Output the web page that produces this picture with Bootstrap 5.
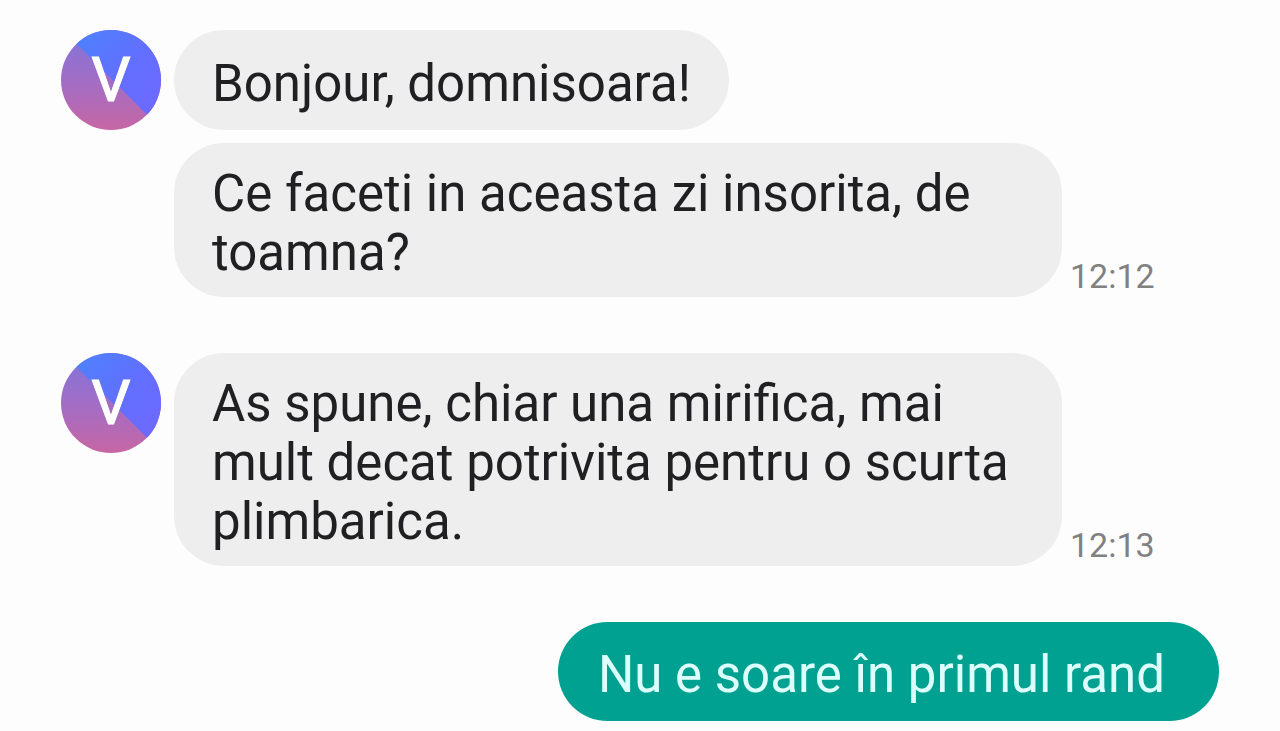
<!DOCTYPE html>
<html lang="ro">
<head>
<meta charset="utf-8">
<meta name="viewport" content="width=device-width, initial-scale=1">
<title>Chat</title>
<link href="https://cdn.jsdelivr.net/npm/bootstrap@5.3.0/dist/css/bootstrap.min.css" rel="stylesheet">
<style>
body{background:#fdfdfd;font-family:Roboto,"Liberation Sans",sans-serif;color:#202022}
.chat{padding:30px 61px 8px;gap:56px}
.thread{gap:13px}
.avatar{width:100px;height:100px}
.bubbles{gap:13px}
.bubble{background:#eee;border-radius:50px;padding:24px 38px 17px;font-size:51px;line-height:59px}
.bubble-wide{max-width:888px;padding:21px 38px 15px}
.stamp{font-size:34px;line-height:42px;color:#818181;margin-left:8px}
.bubble-own{background:#00a190;color:#dcfffb;padding:23px 54px 17px 40px}
</style>
</head>
<body>
<main class="chat d-flex flex-column">
<section class="thread d-flex align-items-start">
<svg class="avatar flex-shrink-0" viewBox="0 0 100 100" role="img" aria-label="V">
<defs>
<linearGradient id="warm" x1="0" y1="0" x2="0" y2="1"><stop offset=".15" stop-color="#8a72d6"/><stop offset=".6" stop-color="#a86cc0"/><stop offset="1" stop-color="#c766a4"/></linearGradient>
<linearGradient id="cool" x1="0" y1="0" x2="1" y2="1"><stop offset="0" stop-color="#4688fb"/><stop offset=".5" stop-color="#626ffe"/><stop offset="1" stop-color="#7466fe"/></linearGradient>
<clipPath id="disc"><circle cx="50" cy="50" r="50"/></clipPath>
</defs>
<g clip-path="url(#disc)"><path d="M0 0H100V100H0Z" fill="url(#warm)"/><path d="M0-2V-10H110V109Z" fill="url(#cool)"/></g>
<text x="50" y="71" text-anchor="middle" font-size="62" fill="#fff" stroke="#fff">V</text>
</svg>
<div class="bubbles d-flex flex-column align-items-start">
<div class="bubble">Bonjour, domnisoara!</div>
<div class="d-flex align-items-end"><div class="bubble bubble-wide">Ce faceti in aceasta zi insorita, de toamna?</div><time class="stamp">12:12</time></div>
</div>
</section>
<section class="thread d-flex align-items-start">
<svg class="avatar flex-shrink-0" viewBox="0 0 100 100" role="img" aria-label="V">
<g clip-path="url(#disc)"><path d="M0 0H100V100H0Z" fill="url(#warm)"/><path d="M0-2V-10H110V109Z" fill="url(#cool)"/></g>
<text x="50" y="71" text-anchor="middle" font-size="62" fill="#fff" stroke="#fff">V</text>
</svg>
<div class="d-flex align-items-end"><div class="bubble bubble-wide">As spune, chiar una mirifica, mai mult decat potrivita pentru o scurta plimbarica.</div><time class="stamp">12:13</time></div>
</section>
<div class="bubble bubble-own align-self-end">Nu e soare în primul rand</div>
</main>
<script src="https://cdn.jsdelivr.net/npm/bootstrap@5.3.0/dist/js/bootstrap.bundle.min.js"></script>
</body>
</html>
